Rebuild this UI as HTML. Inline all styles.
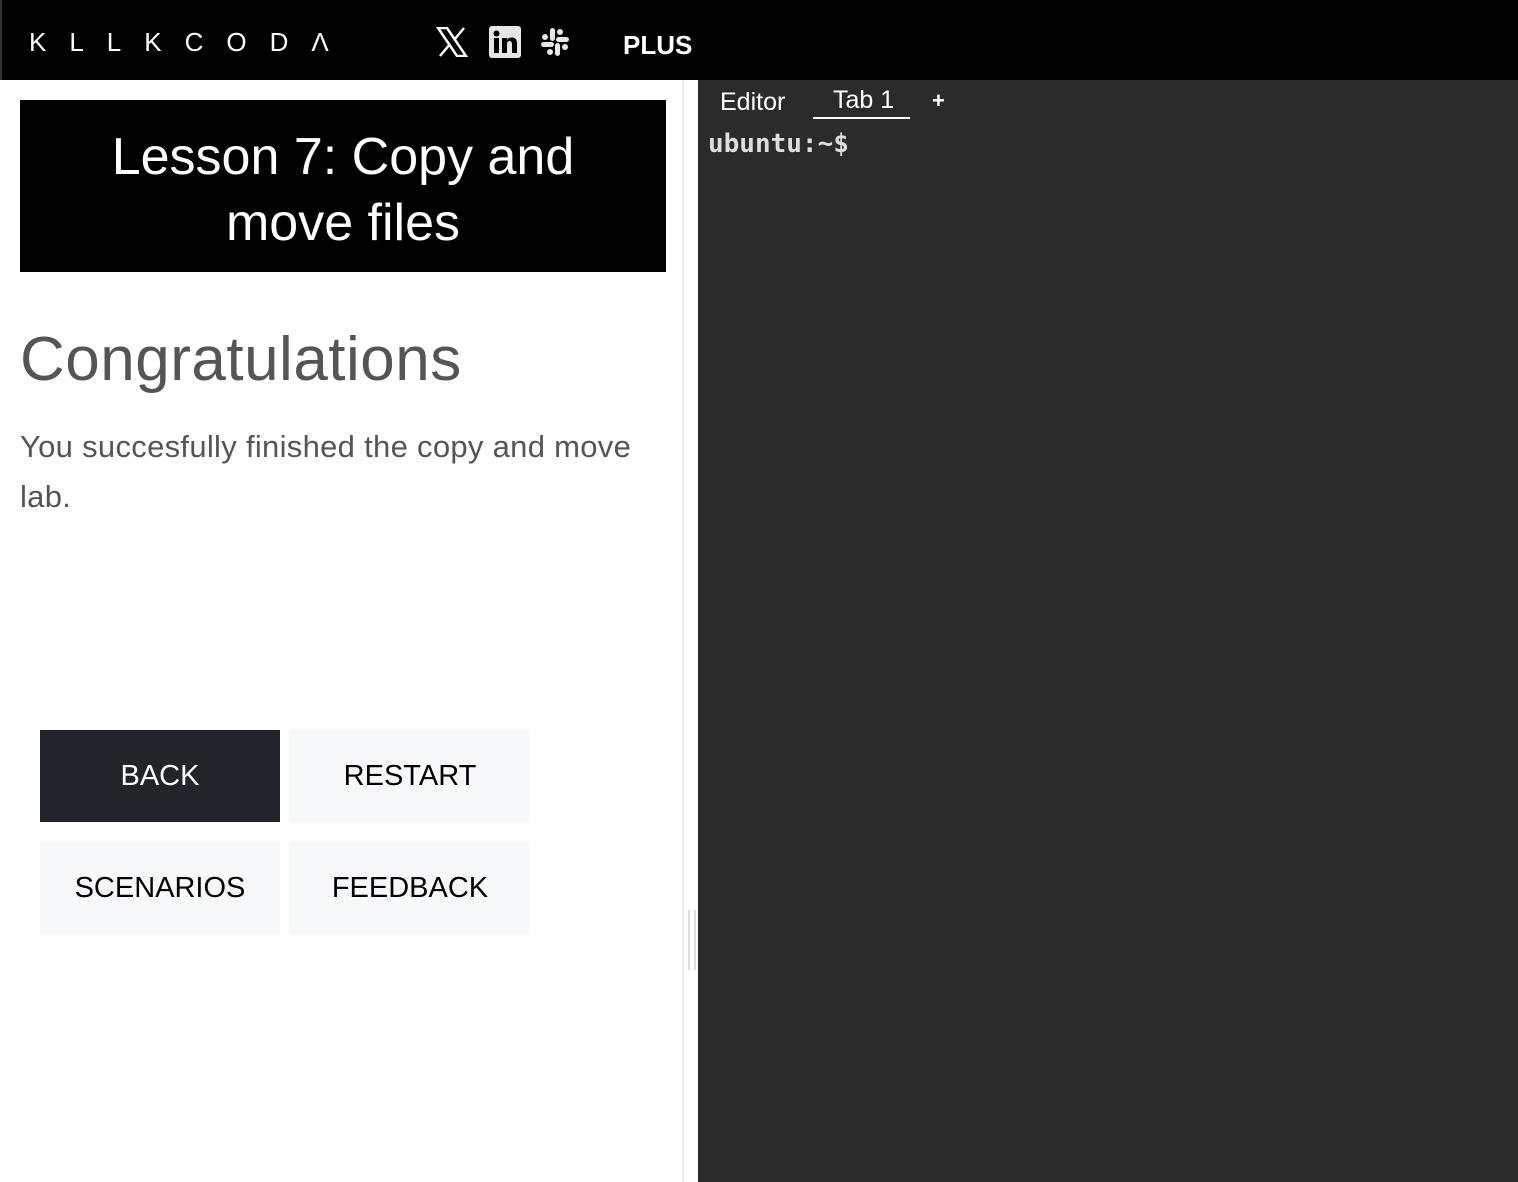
<!DOCTYPE html>
<html><head><meta charset="utf-8"><style>
*{margin:0;padding:0;box-sizing:border-box}
body{width:1518px;height:1182px;overflow:hidden;background:#fff;font-family:"Liberation Sans",sans-serif;position:relative}
.top{position:absolute;left:0;top:0;width:1518px;height:80px;background:#000;border-left:2px solid #333}
.logo{position:absolute;left:27px;top:27px;color:#fff;font-size:26px;letter-spacing:23px;font-weight:normal}
.plus{position:absolute;left:621px;top:30px;color:#fff;font-size:26px;font-weight:bold}
.left{position:absolute;left:0;top:80px;width:684px;height:1102px;background:#fff;border-right:2px solid #eee}
.title{position:absolute;left:20px;top:20px;width:646px;height:172px;background:#000;color:#fff;text-align:center;font-size:52px;line-height:66px;padding-top:24px}
h1{position:absolute;left:20px;top:244px;font-size:62px;font-weight:normal;color:#555;letter-spacing:0.5px}
p{position:absolute;left:20px;top:342px;width:645px;font-size:31px;line-height:50px;color:#555;letter-spacing:0.3px}
.btn{position:absolute;width:240px;height:92px;background:#f7f8fa;color:#000;font-size:29px;display:flex;align-items:center;justify-content:center}
.handle{position:absolute;top:910px;width:2px;height:60px;background:#ddd}
.term{position:absolute;left:698px;top:80px;width:820px;height:1102px;background:#2b2b2b}
.tab{position:absolute;color:#fff;font-size:24px}
</style></head><body>
<div class="top">
<div class="logo">KLLKCODΛ</div>
<svg style="position:absolute;left:434px;top:27px" width="32" height="30" viewBox="0 0 32 30"><path d="M2 1h9l19 28h-9z" fill="none" stroke="#fff" stroke-width="2.5"/><path d="M28 1L18 13M4 29l10-12" stroke="#fff" stroke-width="2.5"/></svg>
<svg style="position:absolute;left:487px;top:26px" width="32" height="32" viewBox="0 0 32 32"><rect width="32" height="32" rx="3" fill="#e6e6e6"/><rect x="5" y="12" width="5" height="15" fill="#000"/><circle cx="7.5" cy="7.5" r="3" fill="#000"/><path d="M13 12h5v2c1-2 3-2.5 5-2.5 4 0 5 3 5 6V27h-5v-9c0-2-1-3-2.5-3S18 16 18 18v9h-5z" fill="#000"/></svg>
<svg style="position:absolute;left:537px;top:26px" width="32" height="32" viewBox="0 0 32 32" fill="#e6e6e6"><rect x="11" y="2" width="5" height="13" rx="2.5"/><rect x="17" y="11" width="13" height="5" rx="2.5"/><rect x="16" y="17" width="5" height="13" rx="2.5"/><rect x="2" y="16" width="13" height="5" rx="2.5"/><circle cx="21" cy="6" r="3"/><circle cx="26" cy="21" r="3"/><circle cx="11" cy="26" r="3"/><circle cx="6" cy="11" r="3"/></svg>
<div class="plus">PLUS</div>
</div>
<div class="left">
<div class="title">Lesson 7: Copy and<br>move files</div>
<h1>Congratulations</h1>
<p>You succesfully finished the copy and move lab.</p>
<div class="btn" style="left:40px;top:650px;background:#212529;color:#fff">BACK</div>
<div class="btn" style="left:290px;top:650px">RESTART</div>
<div class="btn" style="left:40px;top:762px">SCENARIOS</div>
<div class="btn" style="left:290px;top:762px">FEEDBACK</div>
</div>
<div class="handle" style="left:688px"></div>
<div class="handle" style="left:694px"></div>
<div class="term">
<div class="tab" style="left:22px;top:8px;font-size:25px">Editor</div>
<div class="tab" style="left:135px;top:6px;font-size:25px">Tab 1</div>
<div style="position:absolute;left:115px;top:37px;width:97px;height:2px;background:#fff"></div>
<div class="tab" style="left:234px;top:8px;font-weight:bold;font-size:22px">+</div>
<div style="position:absolute;left:10px;top:49px;color:#ddd;font-family:'DejaVu Sans Mono','Liberation Mono',monospace;font-size:26px;font-weight:bold">ubuntu:~$</div>
</div>
</body></html>
